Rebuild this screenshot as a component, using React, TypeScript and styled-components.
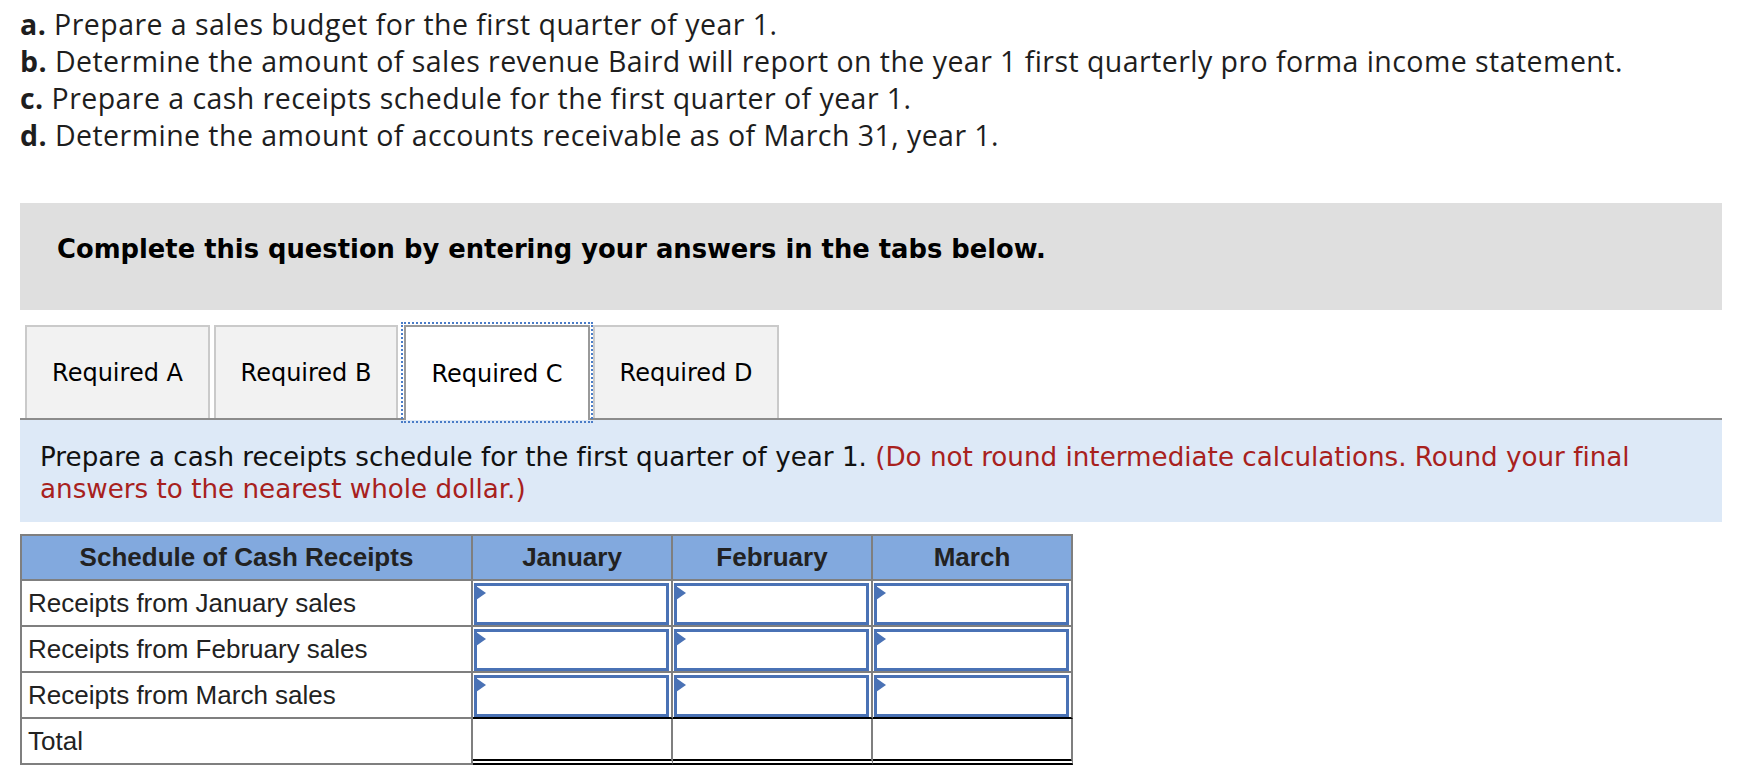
import React from "react";
import styled, { createGlobalStyle, css } from "styled-components";

const GlobalStyle = createGlobalStyle`
  *, *::before, *::after { box-sizing: border-box; }
  html, body { margin: 0; padding: 0; background: #ffffff; }
  body { font-variant-ligatures: none; }
`;

const Page = styled.div`
  width: 1758px;
  padding: 6px 36px 0 20px;
`;

const Parts = styled.ol`
  list-style: none;
  margin: 0;
  padding: 0;
  font-family: "Open Sans", Lato, sans-serif;
  font-size: 28.5px;
  line-height: 37px;
  letter-spacing: 0.45px;
  color: #1e1e1e;
`;

const Part = styled.li`
  white-space: nowrap;
`;

const Letter = styled.b`
  font-weight: 700;
`;

const Banner = styled.div`
  margin-top: 49px;
  height: 107px;
  background: #dfdfdf;
  padding: 31px 37px 0;
  font-family: "DejaVu Sans", Verdana, sans-serif;
  font-weight: 700;
  font-size: 25.8px;
  line-height: 30px;
  color: #000;
`;

const TabBar = styled.div`
  margin-top: 15px;
  display: flex;
  align-items: flex-end;
  gap: 4px;
  padding-left: 5px;
  border-bottom: 2px solid #8c8c8c;
`;

const Tab = styled.button<{ $active?: boolean; $w: number }>`
  width: ${(p) => p.$w}px;
  height: 93px;
  margin: 0;
  padding: 0;
  border: 2px solid #cacaca;
  border-bottom: none;
  background: #f2f2f2;
  font-family: "DejaVu Sans", Verdana, sans-serif;
  font-size: 24px;
  color: #000;
  cursor: pointer;
  ${(p) =>
    p.$active &&
    css`
      background: #ffffff;
      border-color: #9a9a9a;
      height: 95px;
      margin-bottom: -2px;
      margin-left: 2px;
      margin-right: -1px;
      outline: 2px dotted #4a7cc7;
      outline-offset: 1px;
    `}
`;

const Prompt = styled.div`
  background: #dde9f7;
  padding: 21px 20px 17px;
  font-family: "DejaVu Sans", Verdana, sans-serif;
  font-size: 26.2px;
  line-height: 32px;
  color: #111;
`;

const Hint = styled.span`
  color: #a8211d;
`;

const Sheet = styled.table`
  margin-top: 12px;
  width: 1053px;
  table-layout: fixed;
  border-collapse: separate;
  border-spacing: 0;
  border-top: 2px solid #7f7f7f;
  border-left: 2px solid #7f7f7f;
  font-family: "Liberation Sans", Arial, sans-serif;
  font-size: 26px;
  color: #222;
`;

const HeadRow = styled.tr`
  height: 45px;
`;

const BodyRow = styled.tr`
  height: 46px;
`;

const HeadCell = styled.th`
  background: #82a9de;
  font-weight: 700;
  text-align: center;
  padding: 0;
  border-right: 2px solid #7f7f7f;
  border-bottom: 2px solid #7f7f7f;
`;

const LabelCell = styled.td`
  padding: 0 0 0 6px;
  border-right: 2px solid #7f7f7f;
  border-bottom: 2px solid #7f7f7f;
  white-space: nowrap;
`;

const ValueCell = styled.td<{ $edge?: "single" | "double" }>`
  padding: 2px 2px 0 1px;
  border-right: 2px solid #7f7f7f;
  border-bottom: ${(p) =>
    p.$edge === "single"
      ? "2px solid #000"
      : p.$edge === "double"
      ? "6px double #000"
      : "2px solid #7f7f7f"};
`;

const EntryBox = styled.div`
  position: relative;
  height: 100%;
  min-height: 42px;
  border: 3px solid #4a72b5;
  background: #fff;
  &::before {
    content: "";
    position: absolute;
    left: -1px;
    top: 0px;
    width: 0;
    height: 0;
    border-top: 7px solid transparent;
    border-bottom: 7px solid transparent;
    border-left: 10px solid #4a72b5;
  }
`;

const months = ["January", "February", "March"];
const rows = ["Receipts from January sales", "Receipts from February sales", "Receipts from March sales"];

export default function App() {
  return (
    <>
      <GlobalStyle />
      <Page>
        <Parts>
          <Part>
            <Letter>a.</Letter> Prepare a sales budget for the first quarter of year 1.
          </Part>
          <Part>
            <Letter>b.</Letter> Determine the amount of sales revenue Baird will report on the year 1 first quarterly pro forma income statement.
          </Part>
          <Part>
            <Letter>c.</Letter> Prepare a cash receipts schedule for the first quarter of year 1.
          </Part>
          <Part>
            <Letter>d.</Letter> Determine the amount of accounts receivable as of March 31, year 1.
          </Part>
        </Parts>

        <Banner>Complete this question by entering your answers in the tabs below.</Banner>

        <TabBar>
          <Tab $w={185}>Required A</Tab>
          <Tab $w={184}>Required B</Tab>
          <Tab $w={186} $active>
            Required C
          </Tab>
          <Tab $w={186}>Required D</Tab>
        </TabBar>

        <Prompt>
          Prepare a cash receipts schedule for the first quarter of year 1.{" "}
          <Hint>(Do not round intermediate calculations. Round your final answers to the nearest whole dollar.)</Hint>
        </Prompt>

        <Sheet>
          <colgroup>
            <col style={{ width: 451 }} />
            <col style={{ width: 200 }} />
            <col style={{ width: 200 }} />
            <col style={{ width: 200 }} />
          </colgroup>
          <thead>
            <HeadRow>
              <HeadCell>Schedule of Cash Receipts</HeadCell>
              {months.map((m) => (
                <HeadCell key={m}>{m}</HeadCell>
              ))}
            </HeadRow>
          </thead>
          <tbody>
            {rows.map((r, i) => (
              <BodyRow key={r}>
                <LabelCell>{r}</LabelCell>
                {months.map((m) => (
                  <ValueCell key={m} $edge={i === rows.length - 1 ? "single" : undefined}>
                    <EntryBox />
                  </ValueCell>
                ))}
              </BodyRow>
            ))}
            <BodyRow>
              <LabelCell>Total</LabelCell>
              {months.map((m) => (
                <ValueCell key={m} $edge="double" />
              ))}
            </BodyRow>
          </tbody>
        </Sheet>
      </Page>
    </>
  );
}
